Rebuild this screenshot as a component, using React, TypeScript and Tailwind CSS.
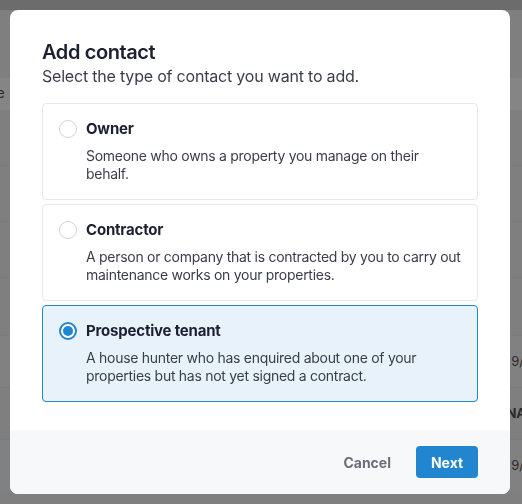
import { useState } from "react";

type Option = {
  id: string;
  title: string;
  description: string;
};

const OPTIONS: Option[] = [
  {
    id: "owner",
    title: "Owner",
    description: "Someone who owns a property you manage on their behalf.",
  },
  {
    id: "contractor",
    title: "Contractor",
    description:
      "A person or company that is contracted by you to carry out maintenance works on your properties.",
  },
  {
    id: "prospective",
    title: "Prospective tenant",
    description:
      "A house hunter who has enquired about one of your properties but has not yet signed a contract.",
  },
];

function BackgroundPage() {
  // dimmed page behind the modal
  return (
    <div className="flex h-[504px] w-full flex-col bg-[#7f7f7f] text-[13px] text-[#2a2a2a]">
      <div className="h-[10px] bg-[#6c6c6c]" />
      <div className="mt-[68px] flex h-[32px] items-center bg-[#858585]">
        <span className="-ml-[3px]">e</span>
      </div>
      <div className="h-[56px] border-b border-[#7a7a7a]" />
      <div className="h-[56px] border-b border-[#7a7a7a]" />
      <div className="h-[56px] border-b border-[#7a7a7a]" />
      <div className="h-[58px] border-b border-[#7a7a7a]" />
      <div className="flex h-[52px] items-center justify-end border-b border-[#7a7a7a] bg-[#818181]">
        <span className="-mr-[2px]">9/</span>
      </div>
      <div className="flex h-[52px] items-center justify-end border-b border-[#7a7a7a]">
        <span className="-mr-[4px] font-bold">NA</span>
      </div>
      <div className="flex h-[52px] items-center justify-end bg-[#818181]">
        <span className="-mr-[2px]">9/</span>
      </div>
    </div>
  );
}

function Radio({ checked }: { checked: boolean }) {
  if (checked) {
    return (
      <span className="flex h-[18px] w-[18px] shrink-0 items-center justify-center rounded-full border-2 border-[#2185d0] bg-white">
        <span className="h-[10px] w-[10px] rounded-full bg-[#2185d0]" />
      </span>
    );
  }
  return (
    <span className="h-[18px] w-[18px] shrink-0 rounded-full border border-[#d4d4d5] bg-white" />
  );
}

export default function App() {
  const [selected, setSelected] = useState("prospective");

  return (
    <div className="relative h-[504px] w-full overflow-hidden font-['Inter','Noto_Sans',sans-serif]">
      <BackgroundPage />

      <div className="fixed inset-0 pl-[10px] pt-[10px]">
        <div className="flex w-[500px] flex-col overflow-hidden rounded-lg bg-white">
          <div className="px-[32px] pb-[28px] pt-[30px]">
            <h2 className="text-[20px] font-semibold leading-[24px] tracking-[-0.4px] text-[#1d2030]">
              Add contact
            </h2>
            <p className="text-[16px] leading-[24px] tracking-[-0.2px] text-[#3a3e4c]">
              Select the type of contact you want to add.
            </p>

            <div className="mt-[15px] flex flex-col gap-1">
              {OPTIONS.map((opt) => {
                const isOn = opt.id === selected;
                return (
                  <button
                    key={opt.id}
                    type="button"
                    onClick={() => setSelected(opt.id)}
                    className={
                      isOn
                        ? "flex flex-col rounded border border-[#2185d0] bg-[#e8f2fa] pb-[16px] pl-[16px] pr-4 pt-[15px] text-left"
                        : "flex flex-col rounded border border-[#e6e7e9] bg-white pb-[16px] pl-[16px] pr-4 pt-[15px] text-left"
                    }
                  >
                    <div className="flex h-[20px] items-center gap-[9px]">
                      <Radio checked={isOn} />
                      <span className="text-[15px] font-bold leading-[20px] tracking-[-0.2px] text-[#1d2030]">
                        {opt.title}
                      </span>
                    </div>
                    <p className="mt-[8px] pl-[27px] text-[14px] leading-[18px] tracking-[-0.28px] text-[#3a3e4c]">
                      {opt.description}
                    </p>
                  </button>
                );
              })}
            </div>
          </div>

          <div className="flex h-[64px] items-center justify-end gap-[11px] bg-[#f7f8fa] pr-[32px]">
            <button
              type="button"
              className="h-[32px] px-[14px] text-[14px] font-bold text-[#6b6e78]"
            >
              Cancel
            </button>
            <button
              type="button"
              className="h-[32px] w-[62px] rounded bg-[#2185d0] text-[14px] font-bold text-white"
            >
              Next
            </button>
          </div>
        </div>
      </div>
    </div>
  );
}
